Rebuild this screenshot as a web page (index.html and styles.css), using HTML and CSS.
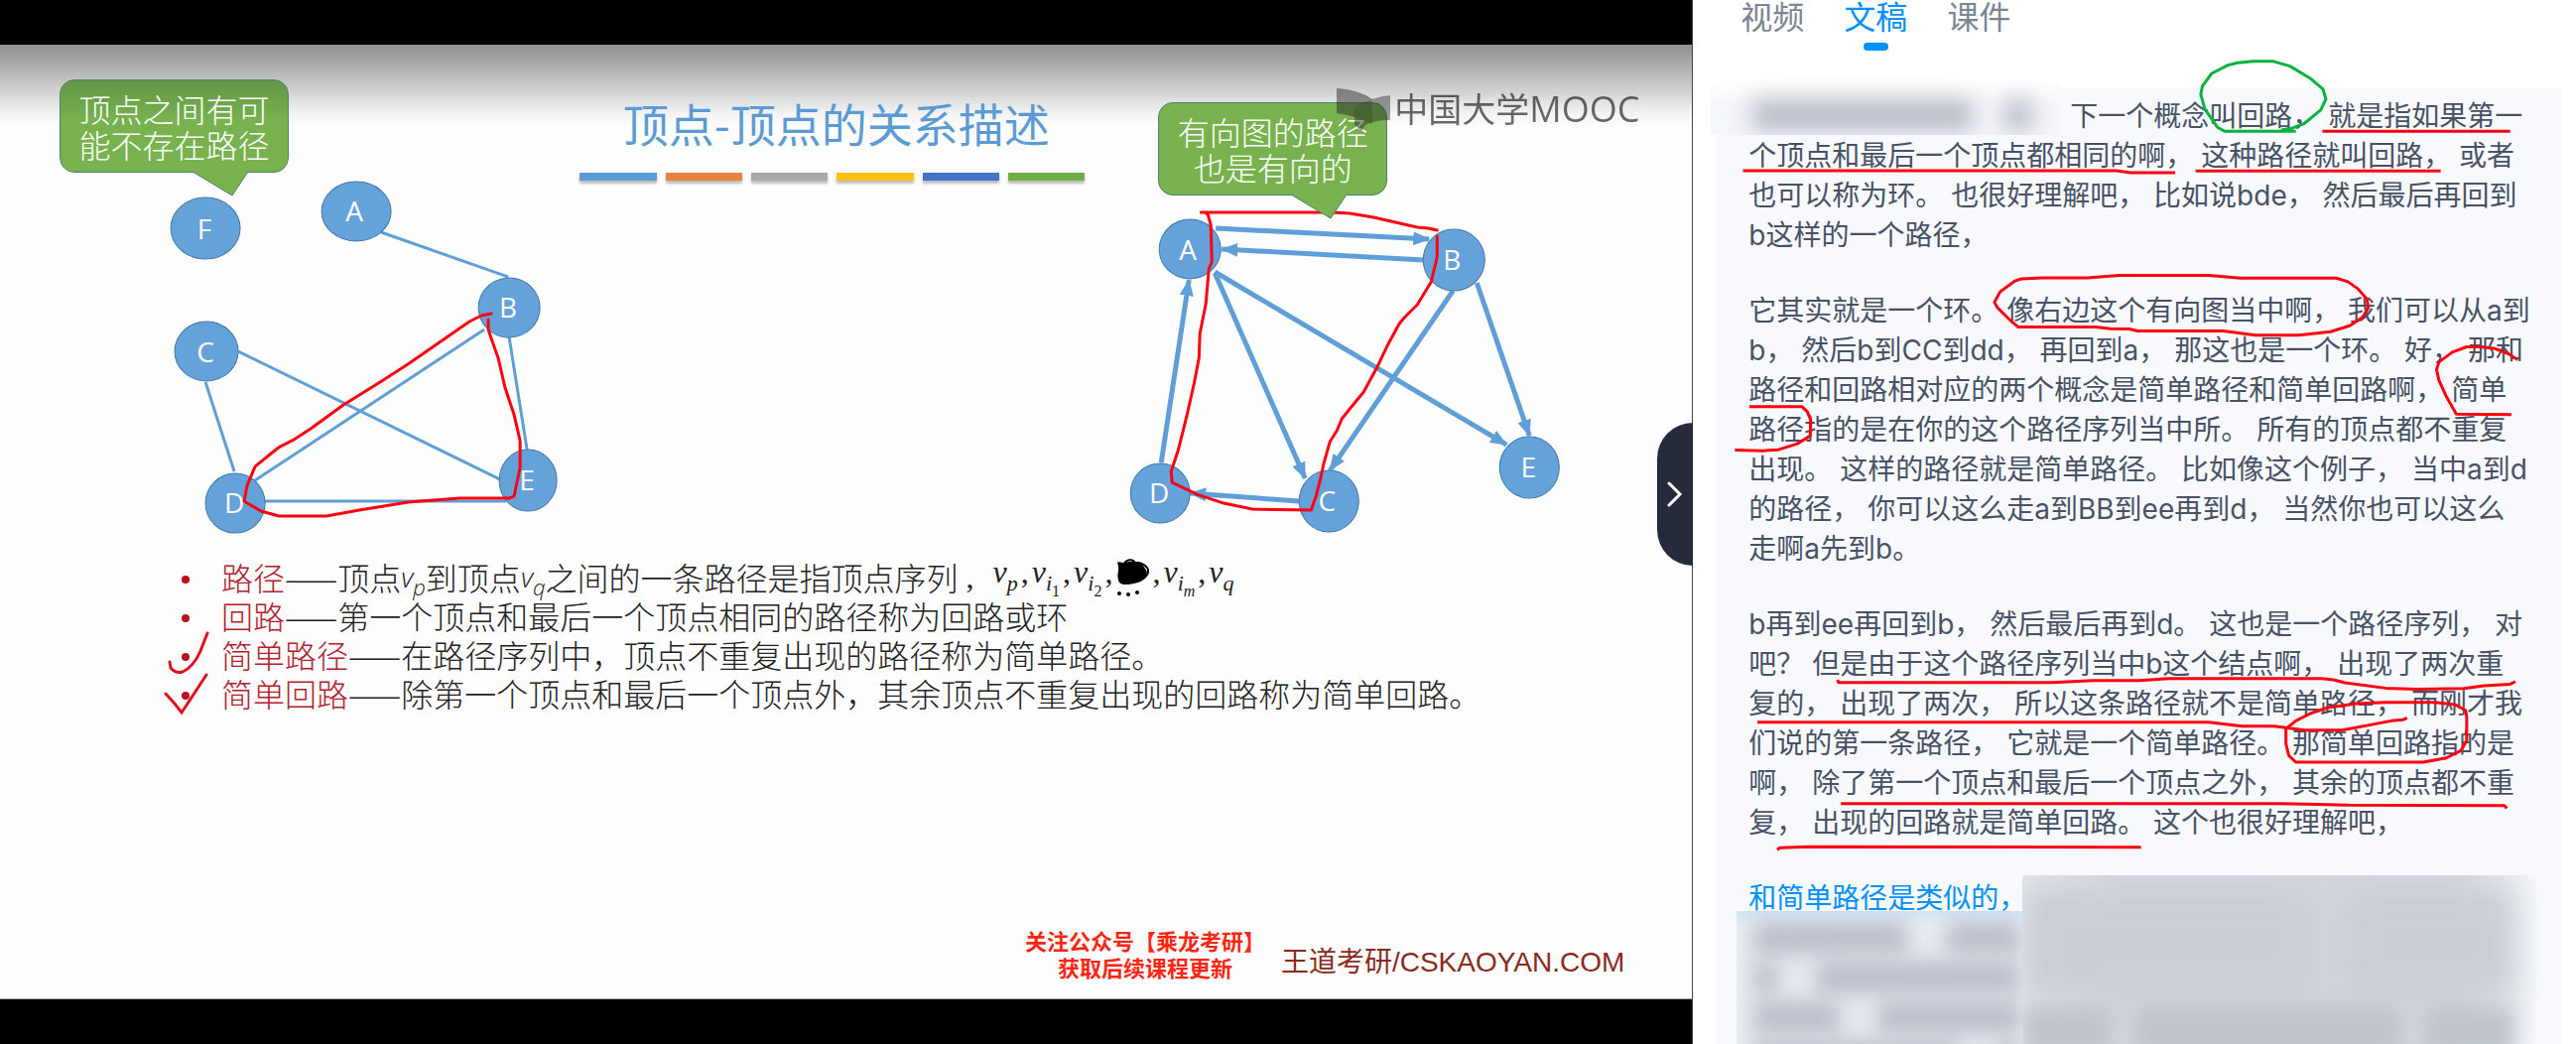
FILE: index.html
```html
<!DOCTYPE html>
<html lang="zh-CN">
<head>
<meta charset="utf-8">
<title>顶点-顶点的关系描述</title>
<link rel="stylesheet" href="styles.css">
</head>
<body>
<main class="player">
  <section class="slide">
    <header class="slide-head">
      <div class="bubble">顶点之间有可<br>能不存在路径
        <svg class="bubble-tail" width="62" height="26" viewBox="0 0 62 26"><path d="M2 0L42 24L58 0"/></svg>
      </div>
      <div class="title-block">
        <h1 class="title">顶点-顶点的关系描述</h1>
        <div class="bars"><i class="bar blue"></i><i class="bar orange"></i><i class="bar gray"></i><i class="bar yellow"></i><i class="bar navy"></i><i class="bar green"></i></div>
      </div>
      <div class="bubble bubble-right">有向图的路径<br>也是有向的
        <svg class="bubble-tail" width="62" height="26" viewBox="0 0 62 26"><path d="M2 0L42 24L58 0"/></svg>
      </div>
    </header>

    <svg class="graphs" viewBox="0 196 1705 349" role="img" aria-label="无向图与有向图">
      <defs>
        <marker id="arrow" markerUnits="userSpaceOnUse" markerWidth="17" markerHeight="14" refX="16" refY="7" orient="auto"><path d="M0 0L17 7L0 14Z" fill="#5f9fd8"/></marker>
      </defs>
      <g class="edges">
        <path d="M384 234L512 279M240 354L504 483M207 385L236 475M488 332L257 484M513 340L531 453M266 505L510 505"/>
      </g>
      <g class="edges directed">
        <path d="M1225 230L1440 241"/><path d="M1434 262L1231 251"/><path d="M1224 275L1315 482"/><path d="M1224 274L1518 448"/>
        <path d="M1464 293L1340 474"/><path d="M1488 285L1541 439"/><path d="M1170 466L1198 282"/><path d="M1309 505L1199 497"/>
      </g>
      <g class="nodes">
        <ellipse cx="207" cy="230" rx="35" ry="31"/><ellipse cx="359" cy="213" rx="35" ry="30"/>
        <ellipse cx="513" cy="310" rx="31" ry="30"/><ellipse cx="208" cy="354" rx="32" ry="30"/>
        <ellipse cx="237" cy="507" rx="30" ry="30"/><ellipse cx="532" cy="484" rx="29" ry="31"/>
        <ellipse cx="1199" cy="251" rx="31" ry="30"/><ellipse cx="1465" cy="262" rx="31" ry="31"/>
        <ellipse cx="1339" cy="505" rx="30" ry="31"/><ellipse cx="1169" cy="497" rx="30" ry="30"/>
        <ellipse cx="1541" cy="471" rx="30" ry="31"/>
      </g>
      <g class="labels">
        <text x="206" y="241">F</text><text x="357" y="223">A</text><text x="512" y="320">B</text>
        <text x="207" y="365">C</text><text x="236" y="517">D</text><text x="531" y="494">E</text>
        <text x="1197" y="262">A</text><text x="1463" y="272">B</text><text x="1337" y="515">C</text>
        <text x="1168" y="507">D</text><text x="1540" y="481">E</text>
      </g>
      <g class="ink">
        <path d="M495 316L485 318L473 324L411 367L383 385L346 408L313 432L296 443L282 450L273 457L257 470L249 489L246 505L263 515L281 520H329L362 514L411 506L463 502H513L518 500L524 471V444L518 418L509 391L502 361L495 341L492 332V322"/>
        <path d="M1210 214H1343L1360 215L1384 219L1428 229L1439 230L1448 232M1448 238V259L1442 284L1428 307L1415 320L1410 326L1398 348L1387 371L1374 395L1360 412L1352 422L1347 434L1340 445L1334 466L1331 480L1326 500L1321 514L1262 513L1233 507L1206 498L1181 486L1180 475L1187 454L1196 418L1203 387L1208 361L1209 336L1215 306L1218 271L1221 264L1220 227L1217 216L1214 214"/>
      </g>
    </svg>

    <ul class="terms">
      <li><b>路径</b><span class="dash">——</span>顶点<i class="v">v<sub>p</sub></i>到顶点<i class="v">v<sub>q</sub></i>之间的一条路径是指顶点序列<span class="formula"><span class="lead">,</span><i>v<sub>p</sub></i>,<i>v<sub>i<small>1</small></sub></i>,<i>v<sub>i<small>2</small></sub></i>,<svg class="scribble" width="34" height="40" viewBox="0 0 34 40"><path d="M2 5C4 3 8 6 10 5C14 3 28 4 30 11C35 16 28 24 20 25C12 28 3 28 3 22C1 16 5 12 2 5Z"/><path class="loops" d="M8 9C9 1 19 0 20 6M17 5C28 4 36 10 32 17C28 24 15 28 5 24"/><circle cx="4" cy="36" r="2"/><circle cx="13" cy="37" r="2"/><circle cx="22" cy="35" r="2"/></svg>,<i>v<sub>i<small><i>m</i></small></sub></i>,<i>v<sub>q</sub></i></span></li>
      <li><b>回路</b><span class="dash">——</span>第一个顶点和最后一个顶点相同的路径称为回路或环</li>
      <li><b>简单路径</b><span class="dash">——</span>在路径序列中，顶点不重复出现的路径称为简单路径。
        <svg class="tick" width="50" height="48" viewBox="166 636 50 48"><path d="M172 667L173 673Q178 679 185 677Q196 672 203 656L210 638"/></svg></li>
      <li><b>简单回路</b><span class="dash">——</span>除第一个顶点和最后一个顶点外，其余顶点不重复出现的回路称为简单回路。
        <svg class="tick" width="50" height="48" viewBox="164 679 50 48"><path d="M166 703L175 713L182 722L190 710L207 684"/></svg></li>
    </ul>

    <footer class="slide-foot">
      <p class="notice">关注公众号【乘龙考研】<br>获取后续课程更新</p>
      <p class="credit">王道考研/CSKAOYAN.COM</p>
    </footer>

    <div class="watermark">
      <svg width="54" height="46" viewBox="0 0 54 46"><path d="M0 0Q22 1 36 11V36Q20 28 0 25Z" opacity=".8"/><path d="M54 7V32Q38 32 29 37L25 43L18 37V19Q34 9 54 7Z" opacity=".75"/></svg>
      <span>中国大学<span class="mooc">MOOC</span></span>
    </div>
  </section>
  <button class="collapse" aria-label="收起"><svg width="16" height="28" viewBox="0 0 16 28"><path d="M2 3L13 14L2 25"/></svg></button>
</main>

<aside class="panel">
  <nav class="tabs">
    <a href="#video">视频</a>
    <a href="#text" class="active">文稿</a>
    <a href="#slides">课件</a>
  </nav>
  <article class="transcript">
    <p class="first"><span class="gap"></span>下一个概念叫回路， 就是指如果第一个顶点和最后一个顶点都相同的啊， 这种路径就叫回路， 或者也可以称为环。 也很好理解吧， 比如说bde， 然后最后再回到b这样的一个路径，</p>
    <p>它其实就是一个环。 像右边这个有向图当中啊， 我们可以从a到b， 然后b到CC到dd， 再回到a， 那这也是一个环。 好， 那和路径和回路相对应的两个概念是简单路径和简单回路啊， 简单路径指的是在你的这个路径序列当中所。 所有的顶点都不重复出现。 这样的路径就是简单路径。 比如像这个例子， 当中a到d的路径， 你可以这么走a到BB到ee再到d， 当然你也可以这么走啊a先到b。</p>
    <p>b再到ee再回到b， 然后最后再到d。 这也是一个路径序列， 对吧？ 但是由于这个路径序列当中b这个结点啊， 出现了两次重复的， 出现了两次， 所以这条路径就不是简单路径， 而刚才我们说的第一条路径， 它就是一个简单路径。 那简单回路指的是啊， 除了第一个顶点和最后一个顶点之外， 其余的顶点都不重复， 出现的回路就是简单回路。 这个也很好理解吧，</p>
    <p class="current">和简单路径是类似的，</p>
  </article>
  <div class="veil veil-top"><i></i><i></i></div>
  <div class="veil veil-left">
    <div class="row"><i class="w6"></i><i class="w3"></i></div>
    <div class="row"><i class="w1"></i><i class="w8"></i></div>
    <div class="row"><i class="w3"></i><i class="w5"></i></div>
    <div class="row"><i class="w8"></i><i class="w1"></i></div>
  </div>
  <div class="veil veil-right">
    <div class="row"><i class="w5"></i><i class="w3"></i></div>
    <div class="row last"><i class="w1"></i><i class="w3"></i><i class="w1"></i></div>
  </div>
  <svg class="notes" viewBox="0 0 890 1052" preserveAspectRatio="xMinYMin meet" aria-hidden="true">
    <g transform="translate(-26 0) scale(.5842 .3333)">
      <path class="circle" d="M1085 397H962L950 385L940 360L928 330L921 285L924 260L940 222L968 197L985 190L1012 185H1045L1075 200L1110 237L1132 270L1137 300L1128 333L1100 373L1080 387L1060 393"/>
      <path d="M1131 397H1455M131 516H775L800 522H877M912 517H1335"/>
    </g>
    <g transform="translate(-26 280) scale(.5842 .3333)">
      <path d="M648 0H725L780 -7H935L990 1H1155L1175 12L1192 33L1208 65L1210 92L1200 120L1178 145L1145 163L1090 174H1015L960 161H812L798 155L765 154L740 149H606L590 125L570 90L565 74L575 42L600 10L612 3L648 0"/>
      <path d="M1468 248L1452 230L1428 214L1405 209L1380 209L1355 225L1332 255L1328 278L1332 310L1345 360L1362 412L1457 414M142 390H233L242 405L248 430L247 478L225 502L192 520L165 523L117 521"/>
    </g>
    <g transform="translate(-26 590) scale(.5842 .3333)">
      <path d="M294 286L296 294H665L735 288H815L865 282H1130L1150 286L1170 295L1240 311L1295 314L1375 312L1410 304L1455 299L1464 291"/>
      <path d="M156 414H935L992 426H1048L1100 438H1165L1250 410L1270 407L1277 401"/>
      <path d="M1068 434L1085 410L1110 388L1140 370L1190 358L1240 354H1325L1360 361L1378 378L1380 400V470L1370 500L1345 522L1305 535H1085L1073 515L1068 480V434"/>
      <path d="M300 660H1060L1175 665L1445 666L1449 675M190 800L195 794L245 791L818 792"/>
    </g>
  </svg>
</aside>
</body>
</html>
```
FILE: styles.css
```css
* { box-sizing: border-box; }
body {
  margin: 0;
  display: flex;
  min-height: 100vh;
  background: #fff;
  font-family: "Noto Sans CJK SC", sans-serif;
}
h1, p, ul { margin: 0; padding: 0; font-weight: 400; }

/* Video side */
.player {
  flex: 1706 1 0;
  position: relative;
  display: flex;
  flex-direction: column;
  padding: 45px 0;
  background: #000;
  border-right: 1px solid #444;
}
.slide {
  flex: 1;
  position: relative;
  display: flex;
  flex-direction: column;
  background: linear-gradient(#8f8f8f, #c2c2c2 36px, #f4f4f4 70px, #fdfdfd 84px);
  border-bottom: 1px solid #aaa;
}
.slide-head {
  display: flex;
  align-items: flex-start;
  padding: 35px 307px 0 60px;
  height: 151px;
}
.bubble {
  position: relative;
  width: 231px;
  padding: 10px 0;
  border: 1px solid #4f8070;
  border-radius: 15px;
  background: linear-gradient(#639647, #77b24e 40px);
  color: #fff;
  font-size: 32px;
  font-weight: 300;
  line-height: 36px;
  text-align: center;
}
.bubble-right { margin: 23px 0 0 74px; background: #77b24e; }
.bubble-tail {
  position: absolute;
  top: 100%;
  right: 36px;
  fill: #77b24e;
  stroke: #4f8070;
}
.title-block { width: 509px; margin-left: auto; padding-top: 16px; }
.title {
  padding-left: 8px;
  color: #5b9bd5;
  font-size: 46px;
  line-height: 54px;
  text-align: center;
}
.bars { display: flex; gap: 9px; margin-top: 24px; }
.bar { flex: 1; height: 8px; box-shadow: 0 3px 3px #bbb; }
.blue { background: #5b9bd5; }
.orange { background: #e58242; }
.gray { background: #a9a9a9; }
.yellow { background: #fdc010; }
.navy { background: #4472c4; }
.green { background: #70ad47; }

.graphs { display: block; width: 100%; overflow: visible; }
.edges { fill: none; stroke: #5f9fd8; stroke-width: 3; }
.directed { stroke-width: 5; }
.directed path { marker-end: url(#arrow); }
.nodes { fill: #65a2da; stroke: #3f78a8; }
.labels {
  fill: #fff;
  font: 28px "Open Sans", sans-serif;
  text-anchor: middle;
}
.ink { fill: none; stroke: #ff0010; stroke-width: 3; stroke-linejoin: round; stroke-linecap: round; }

.terms {
  list-style: none;
  margin-top: 17px;
  padding-left: 183px;
  color: #222;
  font-size: 32px;
  font-weight: 300;
  line-height: 39px;
}
.terms li { position: relative; display: flex; height: 39px; white-space: nowrap; }
.terms li::before {
  content: "";
  width: 8px;
  height: 8px;
  margin: 18px 32px 0 0;
  border-radius: 50%;
  background: #b8101c;
}
.terms b { color: #b4202c; font-weight: 300; }
.v { font-family: "Open Sans", sans-serif; font-size: 28px; }
.terms sub { font-size: 22px; line-height: 0; vertical-align: -8px; }
.terms small { font-size: 16px; font-style: normal; vertical-align: -6px; }
.formula {
  display: flex;
  gap: 3px;
  font-family: "Liberation Serif", serif;
  line-height: 28px;
}
.formula .lead { width: 32px; padding-left: 8px; line-height: 39px; }
.loops { fill: none; stroke: #000; stroke-width: 2; }
.tick {
  position: absolute;
  left: -18px;
  top: -4px;
  fill: none;
  stroke: #e0101c;
  stroke-width: 3;
  stroke-linecap: round;
}

.slide-foot {
  display: flex;
  align-items: flex-end;
  justify-content: flex-end;
  gap: 16px;
  margin-top: auto;
  padding: 0 68px 18px 0;
}
.notice {
  color: #ff2510;
  font-size: 22px;
  font-weight: 700;
  line-height: 27px;
  text-align: center;
}
.credit {
  color: #8a2a1c;
  font: 28px/36px "Liberation Sans", "Noto Sans CJK SC", sans-serif;
}
.watermark {
  position: absolute;
  top: 44px;
  right: 53px;
  display: flex;
  gap: 4px;
  color: #000;
  fill: #222;
  opacity: .58;
  font-size: 34px;
  line-height: 40px;
}
.mooc { font-family: "Open Sans", sans-serif; font-size: 36px; }
.collapse {
  position: absolute;
  top: 426px;
  right: -1px;
  width: 36px;
  height: 144px;
  padding: 0 0 0 10px;
  display: flex;
  align-items: center;
  border: 0;
  border-radius: 36px 0 0 36px;
  background: #252b3a;
}
.collapse path { fill: none; stroke: #fff; stroke-width: 3; stroke-linecap: round; }

/* Transcript side */
.panel {
  flex: 890 1 0;
  position: relative;
  display: flex;
  flex-direction: column;
  height: 100vh;
  overflow: hidden;
}
.tabs {
  display: flex;
  gap: 40px;
  height: 88px;
  flex: none;
  padding-left: 48px;
  font-size: 32px;
  line-height: 30px;
}
.tabs a { color: #7b8496; text-decoration: none; }
.tabs .active { color: #0091ff; }
.active::after {
  content: "";
  display: block;
  width: 25px;
  height: 8px;
  margin: 13px auto 0;
  border-radius: 4px;
  background: #0091ff;
}
.transcript {
  flex: 1;
  margin: 0 14px 0 24px;
  padding: 9px 32px;
  background: #f7f9fd;
  color: #475266;
  font: 28px/40px Inter, "Noto Sans CJK SC", sans-serif;
}
.transcript p { margin-bottom: 36px; }
.gap { display: inline-block; width: 324px; }
.transcript .current { color: #0091ff; }

/* Obscured passages */
.veil { position: absolute; overflow: hidden; background: #f2f4f8; }
.veil i { display: block; background: #b9bec9; filter: blur(11px); }
.veil-top {
  left: 18px;
  top: 78px;
  width: 352px;
  height: 58px;
  padding: 22px 0 0 42px;
  display: flex;
  gap: 32px;
  background: linear-gradient(#fff, #f5f6f9 50%);
}
.veil-top i { width: 222px; height: 32px; }
.veil-top i + i { width: 28px; }
.row { display: flex; gap: 36px; }
.w1 { flex: 1; }
.w3 { flex: 3; }
.w5 { flex: 5; }
.w6 { flex: 6; }
.w8 { flex: 8; }
.veil-left {
  left: 44px;
  top: 918px;
  width: 288px;
  bottom: 0;
  padding: 10px 0 0 16px;
  background: linear-gradient(#d3e5f8, #eceff4 16px);
}
.veil-left .row { height: 40px; }
.veil-left i { height: 34px; }
.veil-right {
  left: 332px;
  top: 882px;
  right: 14px;
  bottom: 0;
  padding: 12px 48px 0 0;
  background: linear-gradient(90deg, #e4e7ec, #d3d7dd 100px, #d3d7dd 440px, #f7f9fd 520px);
}
.veil-right .row { height: 120px; gap: 24px; }
.veil-right i { height: 112px; background: #c9cdd5; filter: blur(16px); }
.veil-right .last { height: 60px; }
.veil-right .last i { height: 50px; background: #bfc4cd; filter: blur(10px); }
.notes {
  position: absolute;
  left: 0;
  top: 0;
  width: 100%;
  pointer-events: none;
  fill: none;
  stroke: #ff0010;
  stroke-width: 3;
  stroke-linejoin: round;
}
.notes path { vector-effect: non-scaling-stroke; }
.notes .circle { stroke: #08b23c; }
```
